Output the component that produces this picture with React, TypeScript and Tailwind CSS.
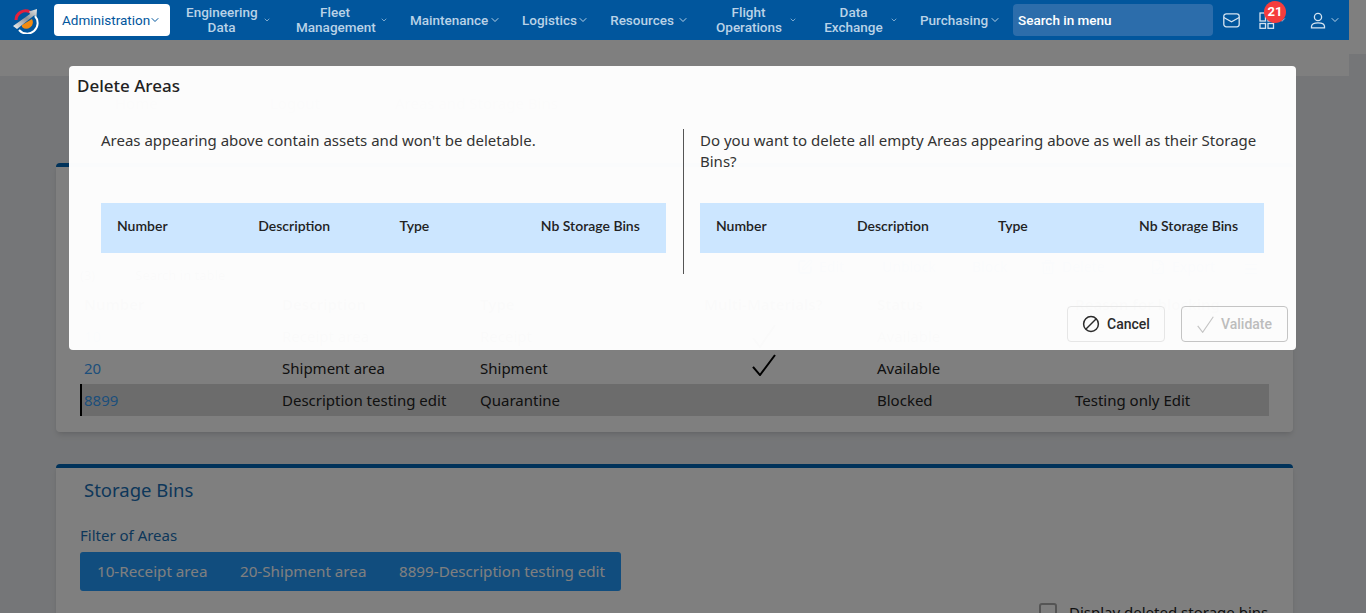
import React from "react";
import { ChevronDown, SquarePen, Trash2, FileCheck, Menu } from "lucide-react";

const navItems = [
  { lines: ["Engineering", "Data"], ml: "ml-[16px]", w: "w-[71px]", gap: "ml-[6px]", size: 8 },
  { lines: ["Fleet", "Management"], ml: "ml-[25px]", w: "w-[78px]", gap: "ml-[6px]", size: 8 },
  { lines: ["Maintenance"], ml: "ml-[22px]", w: "w-[76px]", gap: "ml-[3px]", size: 12 },
  { lines: ["Logistics"], ml: "ml-[21px]", w: "w-[52px]", gap: "ml-[3px]", size: 12 },
  { lines: ["Resources"], ml: "ml-[21px]", w: "w-[64px]", gap: "ml-[3px]", size: 12 },
  { lines: ["Flight", "Operations"], ml: "ml-[27px]", w: "w-[65px]", gap: "ml-[8px]", size: 8 },
  { lines: ["Data", "Exchange"], ml: "ml-[24px]", w: "w-[65px]", gap: "ml-[4px]", size: 8 },
  { lines: ["Purchasing"], ml: "ml-[22px]", w: "w-[66px]", gap: "ml-[3px]", size: 12 },
];

function Logo() {
  return (
    <svg width="28" height="28" viewBox="0 0 28 28" className="ml-[11px] mr-[15px] shrink-0">
      <defs>
        <linearGradient id="lg" x1="0" y1="1" x2="1" y2="0">
          <stop offset="0" stopColor="#f6f6f6" />
          <stop offset="0.55" stopColor="#8b9096" />
          <stop offset="1" stopColor="#e8e8e8" />
        </linearGradient>
      </defs>
      <path d="M5 14 A9.5 9.5 0 0 1 19 6" fill="none" stroke="#e4203c" strokeWidth="3" />
      <path d="M24 10 A10.5 10.5 0 0 1 8 24" fill="none" stroke="#ffffff" strokeWidth="2" />
      <path d="M11 19 L21 13 A6.5 6.5 0 0 1 11 21 Z" fill="#f28a10" />
      <path d="M2 20 L19 8 L18 5.5 L26 3 L25.5 10.5 L23 9.5 L6 23 Z" fill="url(#lg)" />
    </svg>
  );
}

function Mail() {
  return (
    <svg width="17" height="15" viewBox="0 0 17 15" fill="none" stroke="#d5e4f1" strokeWidth="1.3">
      <rect x="0.8" y="0.8" width="15.4" height="13" rx="2.5" />
      <path d="M0.8 4.5 L8.5 8.8 L16.2 4.5" />
    </svg>
  );
}

function Apps() {
  return (
    <svg width="16" height="17" viewBox="0 0 16 17" fill="none" stroke="#d5e4f1" strokeWidth="1.3">
      <rect x="1" y="1" width="5.5" height="8" />
      <rect x="1" y="11.5" width="5.5" height="4.8" />
      <rect x="9" y="11.5" width="5.5" height="4.8" />
      <rect x="9" y="1" width="5.5" height="8" />
    </svg>
  );
}

function UserIcon() {
  return (
    <svg width="16" height="17" viewBox="0 0 16 17" fill="none" stroke="#d5e4f1" strokeWidth="1.3">
      <circle cx="8" cy="5" r="3.6" />
      <path d="M1.5 15.8 V14.5 C1.5 12 4 10.8 8 10.8 C12 10.8 14.5 12 14.5 14.5 V15.8 Z" />
    </svg>
  );
}

function BanIcon() {
  return (
    <svg width="18" height="18" viewBox="0 0 18 18" fill="none" stroke="#2b2b2b" strokeWidth="1.5">
      <circle cx="9" cy="9" r="7.4" />
      <path d="M4 14 L14 4" />
    </svg>
  );
}

function Check({ w, h, color, sw }: { w: number; h: number; color: string; sw: number }) {
  return (
    <svg width={w} height={h} viewBox="0 0 24 24" preserveAspectRatio="none" fill="none" stroke={color} strokeWidth={sw}>
      <path d="M1 14 L8 23 L23 1" />
    </svg>
  );
}

function Nav() {
  return (
    <div className="relative z-10 flex h-[40px] w-[1349px] items-center bg-[#01569d] font-['Roboto',sans-serif] text-[13.5px] font-medium leading-[15px] text-[#b9d2e7]">
      <Logo />
      <div className="flex h-[32px] w-[116px] items-center rounded-[4px] bg-white pl-[8px] font-normal text-[#01569d]">
        <span className="w-[84px] whitespace-nowrap">Administration</span>
        <ChevronDown size={12} strokeWidth={2} className="ml-[3px]" />
      </div>
      {navItems.map((n) => (
        <div key={n.lines[0]} className={`flex items-center ${n.ml}`}>
          <div className={`${n.w} whitespace-nowrap text-center`}>
            {n.lines.map((l) => (
              <div key={l}>{l}</div>
            ))}
          </div>
          <ChevronDown size={n.size} strokeWidth={2} className={n.gap} />
        </div>
      ))}
      <div className="ml-[12px] flex h-[32px] w-[200px] items-center rounded-[4px] bg-[#2c6dab] pl-[5px] text-white">
        Search in menu
      </div>
      <div className="ml-[10px] flex w-[18px] items-center">
        <Mail />
      </div>
      <div className="relative ml-[18px] flex items-center">
        <Apps />
        <ChevronDown size={10} strokeWidth={2} className="ml-[2px]" />
        <span className="absolute left-[5px] top-[-11px] flex h-[22px] w-[22px] items-center justify-center rounded-full bg-[#f53d3d] text-[13px] font-bold text-white">
          21
        </span>
      </div>
      <div className="ml-[23px] flex items-center">
        <UserIcon />
        <ChevronDown size={12} strokeWidth={2} className="ml-[3px]" />
      </div>
    </div>
  );
}

function ToolItem({ icon, label, cls }: { icon?: React.ReactNode; label: string; cls: string }) {
  return (
    <div className={`flex items-center gap-[6px] ${cls}`}>
      {icon}
      <span>{label}</span>
    </div>
  );
}

const rowCols = "grid h-[32px] w-[1189px] grid-cols-[198px_198px_198px_199px_198px_198px] items-center";

function AreasCard() {
  return (
    <div className="ml-[56px] h-[269px] w-[1237px] rounded-[4px] border-t-4 border-[#0064b4] bg-white pl-[24px] pr-[24px] shadow-md">
      <div className="flex h-[110px] items-end justify-end text-[14px] text-[#0064b4]">
        <ToolItem label="Edit" cls="w-[85px]" icon={<SquarePen size={16} />} />
        <ToolItem label="Unblock" cls="w-[90px]" />
        <ToolItem label="Block" cls="w-[68px]" />
        <ToolItem label="Delete" cls="w-[110px]" icon={<Trash2 size={16} />} />
        <ToolItem label="Export" cls="w-[93px]" icon={<FileCheck size={16} />} />
        <Menu size={16} className="mr-[10px]" />
      </div>
      <div className="-mt-[6px] flex h-[8px] gap-[40px] text-[13px] leading-[8px] text-[#333]">
        <span>(3)</span>
        <span>Search in table</span>
      </div>
      <div className="mt-[4px] border-t border-[#ddd]" />
      <div className={`${rowCols} mt-[4px] pl-[4px] font-semibold text-[#333]`}>
        <span>Number</span>
        <span>Description</span>
        <span>Type</span>
        <span className="pl-[26px]">Multi-Materials?</span>
        <span>Status</span>
        <span>Reason for blocking</span>
      </div>
      <div className={`${rowCols} pl-[4px]`}>
        <span className="text-[#3a9ef6]">10</span>
        <span>Receipt area</span>
        <span>Receipt</span>
        <span className="pl-[74px]">
          <Check w={24} h={24} color="#000" sw={2} />
        </span>
        <span>Available</span>
        <span />
      </div>
      <div className={`${rowCols} pl-[4px]`}>
        <span className="text-[#3a9ef6]">20</span>
        <span>Shipment area</span>
        <span>Shipment</span>
        <span className="-translate-y-[3px] pl-[74px]">
          <Check w={24} h={22} color="#000" sw={2} />
        </span>
        <span>Available</span>
        <span />
      </div>
      <div className={`${rowCols} border-l-2 border-black bg-[#d9d9d9] pl-[2px]`}>
        <span className="text-[#3a9ef6]">8899</span>
        <span>Description testing edit</span>
        <span>Quarantine</span>
        <span />
        <span>Blocked</span>
        <span>Testing only Edit</span>
      </div>
    </div>
  );
}

function BinsCard() {
  return (
    <div className="relative ml-[56px] mt-[32px] h-[180px] w-[1237px] rounded-[4px] border-t-4 border-[#0064b4] bg-white pl-[24px] shadow-md">
      <div className="pl-[4px] pt-[9px] text-[18.5px] leading-[26px] text-[#1a6fb5]">Storage Bins</div>
      <div className="mt-[22px] text-[15px] leading-[20px] text-[#1a6fb5]">Filter of Areas</div>
      <div className="mt-[7px] flex h-[39px] w-[541px] items-center rounded-[3px] bg-[#229afc] pl-[17px] text-[15.2px] text-white">
        <span className="w-[143px]">10-Receipt area</span>
        <span className="w-[159px]">20-Shipment area</span>
        <span>8899-Description testing edit</span>
      </div>
      <div className="absolute left-[983px] top-[133px] flex items-center gap-[12px] text-[15px]">
        <span className="h-[18px] w-[18px] rounded-[3px] border-2 border-[#aaa] bg-white" />
        <span>Display deleted storage bins</span>
      </div>
    </div>
  );
}

function HeadRow() {
  return (
    <div className="mt-auto grid h-[50px] grid-cols-4 items-center bg-[#cce6ff] pb-[6px] font-['Lato',sans-serif] text-[14px] font-semibold text-[#222]">
      <span className="pl-[16px]">Number</span>
      <span className="pl-[16px]">Description</span>
      <span className="pl-[16px]">Type</span>
      <span className="pl-[16px]">Nb Storage Bins</span>
    </div>
  );
}

function Modal() {
  return (
    <div className="absolute left-[69px] top-[66px] z-20 flex h-[284px] w-[1227px] flex-col rounded-[4px] bg-white/[0.98] font-['Noto_Sans',sans-serif] text-[#333]">
      <div className="flex h-[40px] items-center pl-[8px] text-[17px] font-medium text-[#222]">Delete Areas</div>
      <div className="mt-[23px] flex h-[145px] pl-[32px] pr-[32px]">
        <div className="flex h-[124px] w-[565px] flex-col text-[15px] leading-[21px]">
          <p className="pt-[1px]">Areas appearing above contain assets and won't be deletable.</p>
          <HeadRow />
        </div>
        <div className="ml-[17px] mr-[16px] w-px bg-[#555]" />
        <div className="flex h-[124px] w-[564px] flex-col text-[15px] leading-[21px]">
          <p className="pt-[1px]">Do you want to delete all empty Areas appearing above as well as their Storage Bins?</p>
          <HeadRow />
        </div>
      </div>
      <div className="mt-[32px] flex justify-end gap-[16px] pr-[8px] font-['Roboto',sans-serif] text-[14px] font-medium">
        <button className="flex h-[36px] w-[98px] items-center justify-center gap-[7px] rounded-[4px] border border-[#e6e6e6] text-[#2b2b2b]">
          <BanIcon />
          Cancel
        </button>
        <button className="flex h-[36px] w-[107px] items-center justify-center gap-[7px] rounded-[4px] border border-[#c4c4c4] text-[#bdbdbd]">
          <Check w={17} h={17} color="#c4c4c4" sw={1.6} />
          Validate
        </button>
      </div>
    </div>
  );
}

export default function App() {
  return (
    <div className="relative flex h-[613px] w-[1366px] overflow-hidden bg-[#ebedf0] font-['Noto_Sans',sans-serif] text-[15px] text-[#222]">
      <div className="w-[1349px]">
        <Nav />
        <div className="h-[36px] bg-white" />
        <div className="flex h-[87px] pl-[115px] pt-[16px] text-[#777]">
          <span className="w-[155px]">Home</span>
          <span className="w-[125px]">Logout</span>
          <span>Areas and Storage Bins</span>
        </div>
        <AreasCard />
        <BinsCard />
      </div>
      <div className="h-[54px] w-[17px] bg-white" />
      <div className="absolute inset-0 bg-black/50" />
      <Modal />
    </div>
  );
}
